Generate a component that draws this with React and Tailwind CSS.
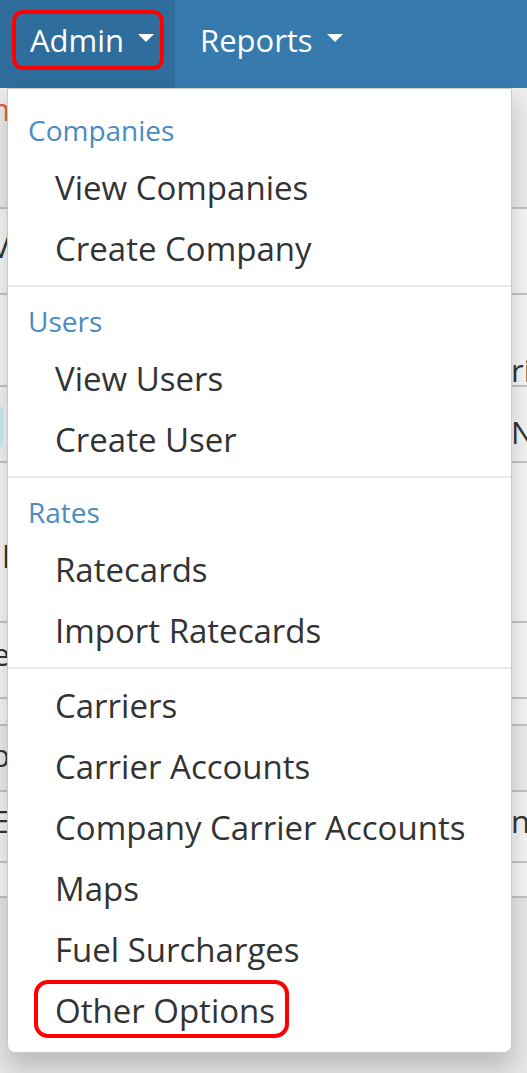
const sections = [
  { header: "Companies", items: ["View Companies", "Create Company"] },
  { header: "Users", items: ["View Users", "Create User"] },
  { header: "Rates", items: ["Ratecards", "Import Ratecards"] },
  {
    header: null,
    items: [
      "Carriers",
      "Carrier Accounts",
      "Company Carrier Accounts",
      "Maps",
      "Fuel Surcharges",
      "Other Options",
    ],
  },
];

// background table rows peeking out around the menu
const rows = [
  { h: 121, bg: "bg-[#ececec]", left: "n", leftCls: "text-[#d9663f] pt-[6px]", right: "" },
  { h: 86, bg: "bg-[#f7f7f7]", left: "V", leftCls: "text-[#333] pt-[22px]", right: "" },
  { h: 92, bg: "bg-[#f7f7f7]", left: "", leftCls: "", right: "rie", rightCls: "pt-[60px]" },
  { h: 76, bg: "bg-[#f4f4f4]", left: "", leftCls: "", right: "NT", rightCls: "pt-[30px]", cyan: true },
  { h: 160, bg: "bg-[#f7f7f7]", left: "l", leftCls: "text-[#333] pt-[78px]", right: "" },
  { h: 76, bg: "bg-[#f7f7f7]", left: "e", leftCls: "text-[#333] pt-[16px]", right: "" },
  { h: 27, bg: "bg-[#f7f7f7]", left: "", leftCls: "", right: "" },
  { h: 66, bg: "bg-[#ececee]", left: "b", leftCls: "text-[#333] pt-[14px]", right: "" },
  { h: 71, bg: "bg-[#f4f4f4]", left: "E", leftCls: "text-[#333] pt-[14px]", right: "n", rightCls: "pt-[14px] text-[#3a7bb0]" },
  { h: 35, bg: "bg-[#f7f7f7]", left: "", leftCls: "", right: "" },
];

function Caret() {
  return (
    <span className="inline-block w-0 h-0 border-t-[8px] border-t-white border-x-[8px] border-x-transparent ml-[14px] mb-[5px] align-middle" />
  );
}

export default function App() {
  return (
    <div
      className="relative w-[527px] h-[1073px] overflow-hidden bg-[#e7e7e8]"
      style={{ fontFamily: '"Open Sans", "Noto Sans", sans-serif' }}
    >
      {/* navbar */}
      <div className="h-[88px] bg-[#367aae] flex items-stretch text-white text-[31px]">
        <div className="w-[175px] bg-[#2f6d9c] flex items-center pl-[12px]">
          <div className="h-[60px] w-[152px] -mt-[8px] border-[4px] border-[#ff0000] rounded-[11px] flex items-center pl-[14px]">
            Admin
            <Caret />
          </div>
        </div>
        <div className="flex items-center pl-[25px] -mt-[8px]">
          Reports
          <Caret />
        </div>
      </div>

      {/* page content behind the menu */}
      <div className="flex flex-col text-[31px] leading-none">
        {rows.map((r, i) => (
          <div
            key={i}
            className={`flex justify-between border-b-2 border-[#c4c4c4] ${r.bg}`}
            style={{ height: r.h }}
          >
            <div className="w-[8px] overflow-hidden flex justify-end">
              <span className={`block -mr-[2px] ${r.leftCls}`}>{r.left}</span>
            </div>
            {r.cyan && <div className="absolute left-0 w-[3px] h-[40px] mt-[20px] bg-[#cdeef2]" />}
            <div className="w-[16px] overflow-hidden">
              <span className={`block text-[#333] whitespace-nowrap ${r.rightCls || ""}`}>{r.right}</span>
            </div>
          </div>
        ))}
      </div>

      {/* dropdown menu */}
      <div className="absolute left-[7px] top-[88px] w-[505px] bg-white border border-[#c9c9c9] rounded-b-[8px] shadow-[0_14px_26px_rgba(0,0,0,0.2)] pt-[13px] pb-[11px]">
        {sections.map((s, si) => (
          <div key={si}>
            {si > 0 && <div className="h-[2px] bg-[#e8e8e8] mt-[6px] mb-[6px]" />}
            {s.header && (
              <div className="h-[55px] flex items-center pl-[20px] text-[28px] text-[#4a8bc2]">
                {s.header}
              </div>
            )}
            {s.items.map((it) => (
              <div key={it} className="h-[61px] flex items-center pl-[47px] text-[33px] text-[#333333]">
                {it === "Other Options" ? (
                  <span className="relative">
                    {it}
                    <span className="absolute -left-[21px] -right-[14px] -top-[6px] -bottom-[3px] border-[4px] border-[#ff0000] rounded-[14px]" />
                  </span>
                ) : (
                  it
                )}
              </div>
            ))}
          </div>
        ))}
      </div>
    </div>
  );
}
